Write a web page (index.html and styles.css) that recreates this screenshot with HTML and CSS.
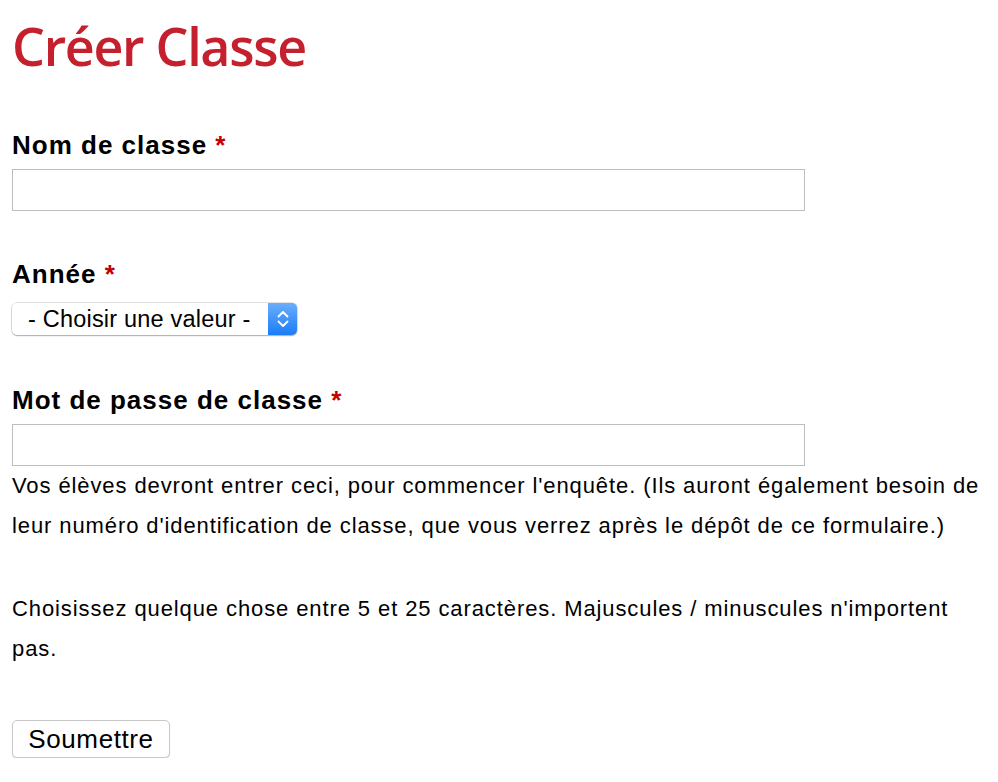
FILE: index.html
```html
<!DOCTYPE html>
<html lang="fr">
<head>
<meta charset="utf-8">
<title>Créer Classe</title>
<link rel="stylesheet" href="styles.css">
</head>
<body>
<main class="page">
  <h1 class="title">Créer Classe</h1>
  <form class="form">
    <div class="field field-name">
      <label class="label" for="nom">Nom de classe <span class="req">*</span></label>
      <input class="text-input" id="nom" type="text">
    </div>
    <div class="field field-year">
      <label class="label" for="annee">Année <span class="req">*</span></label>
      <div class="select-wrap">
        <select class="select" id="annee">
          <option>- Choisir une valeur -</option>
        </select>
        <span class="select-arrow">
          <svg width="14" height="20" viewBox="0 0 14 20" aria-hidden="true">
            <path d="M2.5 7.5 L7 3 L11.5 7.5" fill="none" stroke="#fff" stroke-width="1.8" stroke-linecap="round" stroke-linejoin="round"/>
            <path d="M2.5 12.5 L7 17 L11.5 12.5" fill="none" stroke="#fff" stroke-width="1.8" stroke-linecap="round" stroke-linejoin="round"/>
          </svg>
        </span>
      </div>
    </div>
    <div class="field field-pass">
      <label class="label" for="pass">Mot de passe de classe <span class="req">*</span></label>
      <input class="text-input" id="pass" type="text">
      <p class="desc">Vos élèves devront entrer ceci, pour commencer l'enquête. (Ils auront également besoin de leur numéro d'identification de classe, que vous verrez après le dépôt de ce formulaire.)</p>
      <p class="desc desc-second">Choisissez quelque chose entre 5 et 25 caractères. Majuscules / minuscules n'importent pas.</p>
    </div>
    <button class="submit" type="button">Soumettre</button>
  </form>
</main>
</body>
</html>
```
FILE: styles.css
```css
html, body {
  margin: 0;
  padding: 0;
  background: #fff;
}
body {
  font-family: "Liberation Sans", Arial, Helvetica, sans-serif;
  color: #000;
}
.page {
  padding: 14px 12px 0 12px;
}
.title {
  margin: 0;
  font-family: "Open Sans", "Noto Sans", sans-serif;
  font-weight: 600;
  font-size: 52px;
  line-height: 64px;
  color: #c4202e;
  letter-spacing: -1.3px;
}
.form {
  margin: 0;
}
.field {
  display: flex;
  flex-direction: column;
  align-items: flex-start;
}
.field-name {
  margin-top: 52px;
}
.field-year {
  margin-top: 48px;
}
.field-pass {
  margin-top: 50px;
}
.label {
  font-weight: bold;
  font-size: 26px;
  letter-spacing: 1px;
  line-height: 30px;
  margin-bottom: 9px;
}
.req {
  color: #c40000;
}
.text-input {
  box-sizing: border-box;
  width: 793px;
  height: 42px;
  margin: 0;
  border: 1px solid #bdbdbd;
  border-radius: 0;
  padding: 0 8px;
  font-size: 20px;
  font-family: inherit;
  background: #fff;
}
.field-year .label {
  margin-bottom: 14px;
}
.select-wrap {
  display: inline-flex;
  height: 32px;
  border-radius: 5px;
  box-shadow: 0 0 0 0.5px rgba(0,0,0,0.22), 0 1px 1.5px rgba(0,0,0,0.25);
  overflow: hidden;
}
.select {
  appearance: none;
  -webkit-appearance: none;
  box-sizing: border-box;
  height: 32px;
  width: 256px;
  margin: 0;
  border: none;
  padding: 0 0 0 16px;
  font-family: inherit;
  font-size: 23.5px;
  letter-spacing: 0.2px;
  color: #000;
  background: #fff;
}
.select-arrow {
  width: 29px;
  height: 32px;
  display: flex;
  align-items: center;
  justify-content: center;
  background: linear-gradient(#6aaefc, #1b7cf7);
}
.desc {
  margin: 0;
  font-size: 22px;
  letter-spacing: 0.9px;
  line-height: 40px;
  width: 974px;
}
.desc-second {
  margin-top: 43px;
}
.submit {
  margin-top: 51px;
  box-sizing: border-box;
  width: 158px;
  height: 38px;
  padding: 0;
  font-family: inherit;
  font-size: 26px;
  letter-spacing: 0.6px;
  color: #000;
  background: #fff;
  border: 1px solid #c8c8c8;
  border-radius: 5px;
  box-shadow: 0 1px 1px rgba(0,0,0,0.15);
}
```
